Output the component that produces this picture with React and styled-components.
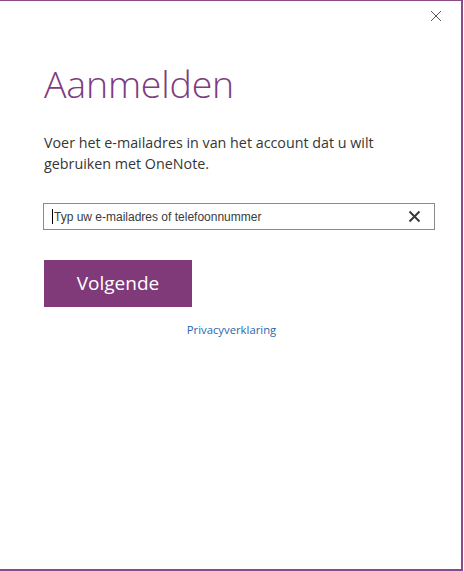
import React from "react";
import styled, { createGlobalStyle } from "styled-components";

const GlobalStyle = createGlobalStyle`
  html, body {
    margin: 0;
    padding: 0;
    background: #ffffff;
  }
`;

const Dialog = styled.div`
  box-sizing: border-box;
  width: 463px;
  height: 571px;
  background: #ffffff;
  border-top: 1px solid #8a4a87;
  border-right: 2px solid #8a4a87;
  border-bottom: 2px solid #8a4a87;
  display: flex;
  flex-direction: column;
  font-family: "Segoe UI", "Open Sans", "Liberation Sans", sans-serif;
`;

const TopBar = styled.div`
  display: flex;
  justify-content: flex-end;
  padding: 9px 19px 0 0;
  height: 14px;
`;

const CloseButton = styled.button`
  border: none;
  background: none;
  padding: 0;
  width: 12px;
  height: 12px;
  display: flex;
  cursor: pointer;
`;

const Content = styled.div`
  padding: 0 0 0 44px;
  display: flex;
  flex-direction: column;
`;

const Title = styled.h1`
  margin: 36px 0 0 0;
  font-family: "Open Sans", "Liberation Sans", sans-serif;
  font-weight: 300;
  font-size: 37.5px;
  line-height: 48px;
  color: #7e3b7f;
  letter-spacing: -0.2px;
`;

const Intro = styled.p`
  margin: 24px 0 0 0;
  width: 400px;
  font-family: "Open Sans", "Liberation Sans", sans-serif;
  font-size: 14.3px;
  line-height: 21px;
  color: #363636;
`;

const InputBox = styled.div`
  box-sizing: border-box;
  margin: 29px 0 0 -1px;
  width: 392px;
  height: 27px;
  border: 1px solid #8a8a8a;
  display: flex;
  align-items: center;
  padding: 0 13px 0 8px;
`;

const EmailInput = styled.input`
  flex: 1;
  border: none;
  outline: none;
  padding: 0;
  font-family: "Liberation Sans", Arial, sans-serif;
  font-size: 12px;
  color: #333;
  background: transparent;
  caret-color: #000;

  &::placeholder {
    color: #3a3a3a;
  }
`;

const Caret = styled.span`
  width: 1px;
  height: 15px;
  background: #000;
  margin-right: 1px;
`;

const ClearButton = styled.button`
  border: none;
  background: none;
  padding: 0;
  width: 13px;
  height: 13px;
  display: flex;
  cursor: pointer;
`;

const PrimaryButton = styled.button`
  margin-top: 30px;
  width: 148px;
  height: 47px;
  border: none;
  background: #803a7a;
  color: #ffffff;
  font-family: "Open Sans", "Liberation Sans", sans-serif;
  font-size: 19px;
  cursor: pointer;
  padding: 0 0 2px 0;
`;

const LinkRow = styled.div`
  display: flex;
  justify-content: center;
  margin-top: 15px;
  padding-left: 2px;
`;

const PrivacyLink = styled.a`
  font-family: "Open Sans", "Liberation Sans", sans-serif;
  font-size: 11.3px;
  color: #2867b2;
  text-decoration: none;
`;

export default function App() {
  return (
    <>
      <GlobalStyle />
      <Dialog>
        <TopBar>
          <CloseButton aria-label="Sluiten">
            <svg width="12" height="12" viewBox="0 0 12 12">
              <path d="M1 1 L11 11 M11 1 L1 11" stroke="#555" strokeWidth="1" fill="none" />
            </svg>
          </CloseButton>
        </TopBar>
        <Content>
          <Title>Aanmelden</Title>
          <Intro>
            Voer het e-mailadres in van het account dat u wilt gebruiken met OneNote.
          </Intro>
          <InputBox>
            <Caret />
            <EmailInput placeholder="Typ uw e-mailadres of telefoonnummer" />
            <ClearButton aria-label="Wissen">
              <svg width="13" height="13" viewBox="0 0 13 13">
                <path d="M1.5 1.5 L11.5 11.5 M11.5 1.5 L1.5 11.5" stroke="#3a3a3a" strokeWidth="2" fill="none" />
              </svg>
            </ClearButton>
          </InputBox>
          <PrimaryButton>Volgende</PrimaryButton>
        </Content>
        <LinkRow>
          <PrivacyLink href="#">Privacyverklaring</PrivacyLink>
        </LinkRow>
      </Dialog>
    </>
  );
}
